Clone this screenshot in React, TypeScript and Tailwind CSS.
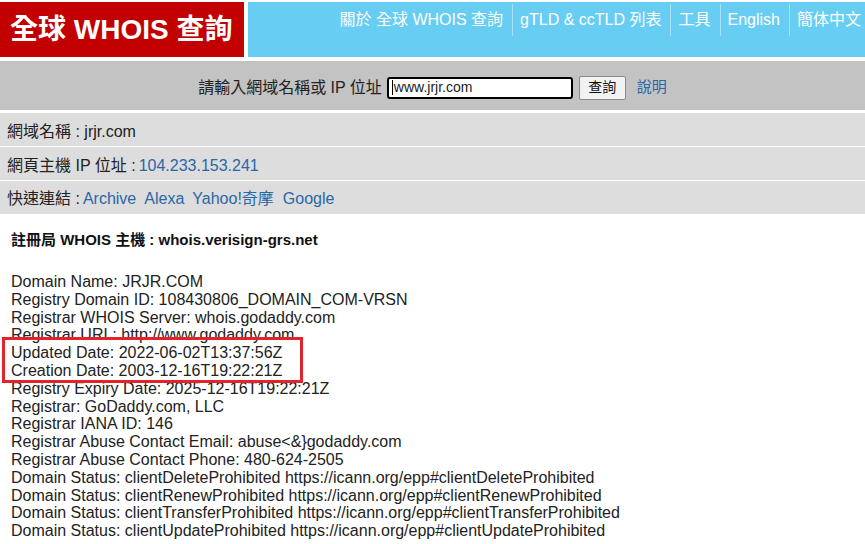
const navItems = ["關於 全球 WHOIS 查詢", "gTLD & ccTLD 列表", "工具", "English", "簡体中文"];

const whoisLines = [
  "Domain Name: JRJR.COM",
  "Registry Domain ID: 108430806_DOMAIN_COM-VRSN",
  "Registrar WHOIS Server: whois.godaddy.com",
  "Registrar URL: http://www.godaddy.com",
  "Updated Date: 2022-06-02T13:37:56Z",
  "Creation Date: 2003-12-16T19:22:21Z",
  "Registry Expiry Date: 2025-12-16T19:22:21Z",
  "Registrar: GoDaddy.com, LLC",
  "Registrar IANA ID: 146",
  "Registrar Abuse Contact Email: abuse<&}godaddy.com",
  "Registrar Abuse Contact Phone: 480-624-2505",
  "Domain Status: clientDeleteProhibited https://icann.org/epp#clientDeleteProhibited",
  "Domain Status: clientRenewProhibited https://icann.org/epp#clientRenewProhibited",
  "Domain Status: clientTransferProhibited https://icann.org/epp#clientTransferProhibited",
  "Domain Status: clientUpdateProhibited https://icann.org/epp#clientUpdateProhibited",
];

const font = "font-['Liberation_Sans','Noto_Sans_CJK_TC',sans-serif]";

const App = () => {
  return (
    <div className={`${font} w-[865px] h-[544px] overflow-hidden bg-white text-[#222]`}>
      {/* header */}
      <div className="flex h-[57px] pt-[2px] gap-[4px]">
        <div className="w-[244px] bg-[#c20000] flex items-center pl-[10px]">
          <span className="text-white font-bold text-[28px] leading-none">全球 WHOIS 查詢</span>
        </div>
        <div className="flex-1 bg-[#68cdf3] flex justify-end items-start pt-[2px]">
          {navItems.map((item, i) => (
            <div
              key={item}
              className={`h-[32px] flex items-center text-white text-[16px] ${
                i > 0 ? "border-l border-[#a9e2f8] pl-[7px]" : ""
              } ${i === navItems.length - 1 ? "pr-[4px]" : "pr-[9px]"}`}
            >
              {item}
            </div>
          ))}
        </div>
      </div>

      {/* search */}
      <div className="mt-[4px] h-[49px] pt-[4px] bg-[#c3c3c3] flex items-center justify-center text-[16px]">
        <span className="mr-[5px]">請輸入網域名稱或 IP 位址</span>
        <div className="w-[186px] h-[22px] border-2 border-black rounded-[3px] bg-white flex items-center pl-[3px] text-[14px]">
          <span className="border-l border-black pl-[1px] leading-[15px]">www.jrjr.com</span>
        </div>
        <button className="ml-[6px] w-[47px] h-[24px] bg-[#f2f2f2] border border-[#8a8a8a] rounded-[2px] text-[14px] text-[#111] flex items-center justify-center">
          查詢
        </button>
        <a className="ml-[11px] text-[#2a67a8] text-[15px]">說明</a>
      </div>

      {/* info rows */}
      <div className="mt-[3px] flex flex-col gap-[1px] text-[16px]">
        <div className="h-[33px] pt-[4px] bg-[#dddddd] flex items-center pl-[7px]">
          網域名稱 : jrjr.com
        </div>
        <div className="h-[33px] pt-[4px] bg-[#dddddd] flex items-center pl-[7px]">
          網頁主機 IP 位址 : <span className="ml-[3px] text-[#2a67a8]">104.233.153.241</span>
        </div>
        <div className="h-[33px] pt-[3px] bg-[#dddddd] flex items-center pl-[7px] gap-[8px]">
          <span>快速連結 :</span>
          <a className="text-[#2a67a8] -ml-[5px]">Archive</a>
          <a className="text-[#2a67a8]">Alexa</a>
          <a className="text-[#2a67a8]">Yahoo!奇摩</a>
          <a className="text-[#2a67a8] ml-[1px]">Google</a>
        </div>
      </div>

      {/* whois */}
      <div className="pl-[11px] pt-[17px]">
        <div className="font-bold text-[15px] leading-[18px] text-[#111]">註冊局 WHOIS 主機 : whois.verisign-grs.net</div>
        <div className="relative mt-[24px] text-[16px] leading-[17.8px] text-[#222]">
          {whoisLines.map((line) => (
            <div key={line} className="whitespace-pre">{line}</div>
          ))}
          <div className="absolute left-[-9px] top-[64px] w-[301px] h-[46px] border-[3px] border-[#e3232c]" />
        </div>
      </div>
    </div>
  );
};

export default App;
